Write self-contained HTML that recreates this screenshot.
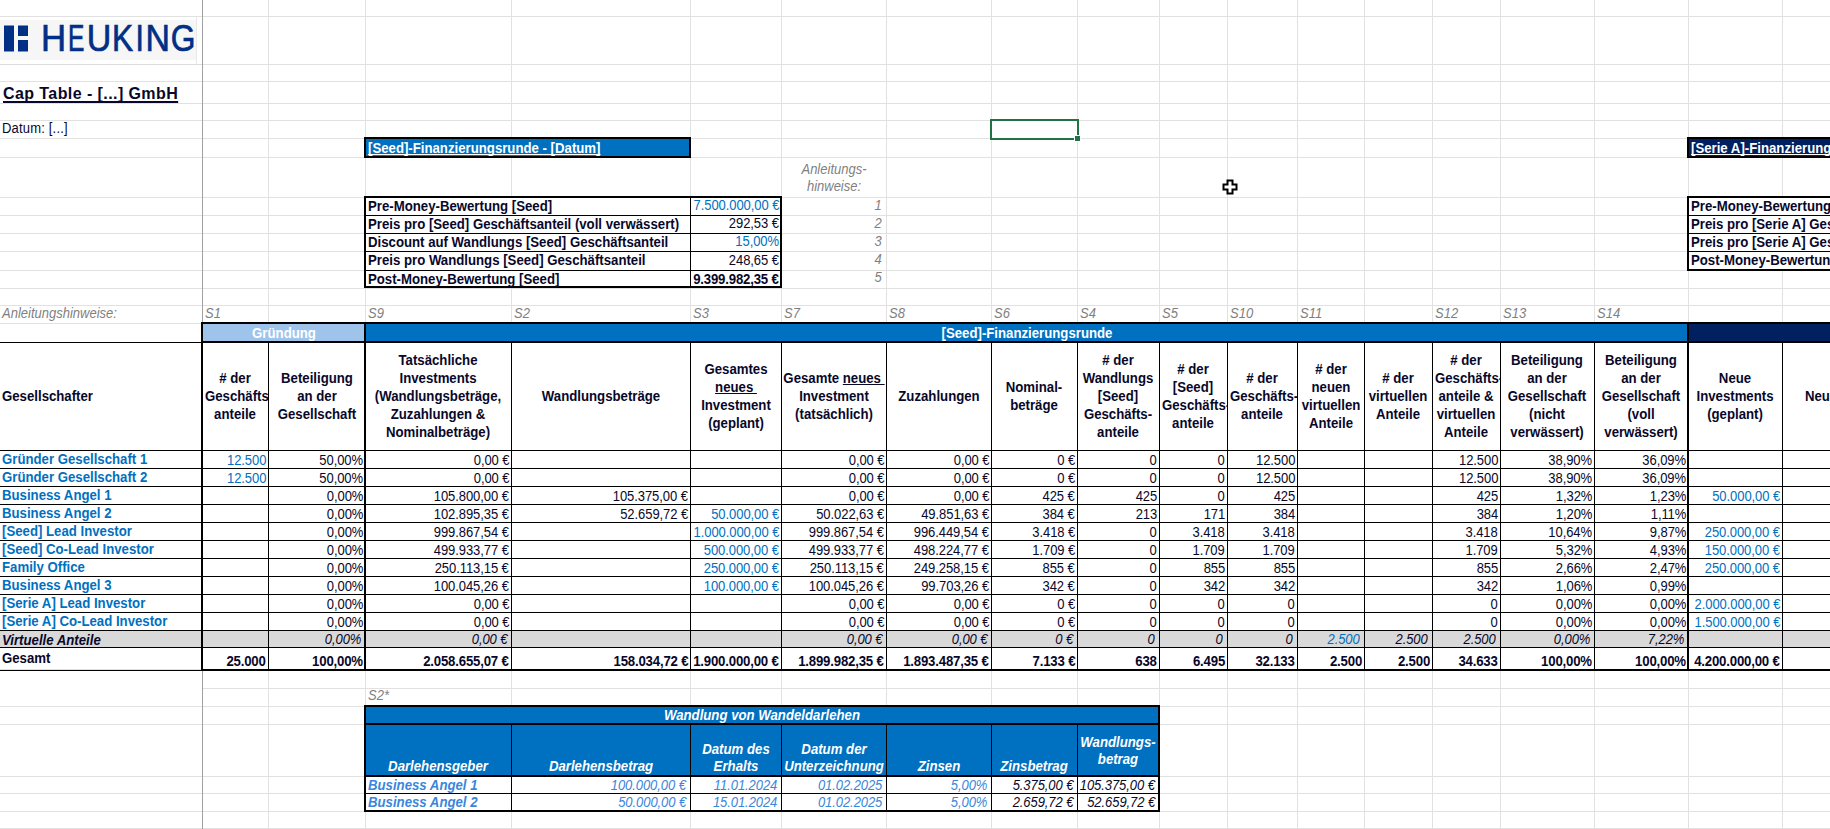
<!DOCTYPE html>
<html><head><meta charset="utf-8"><style>
html,body{margin:0;padding:0;background:#fff;}
#c{position:relative;width:1830px;height:829px;overflow:hidden;background:#fff;font-family:"Liberation Sans",sans-serif;color:#08082a;}
#c>div{position:absolute;}
#c .t{white-space:pre;line-height:20px;text-decoration-skip-ink:none;}
</style></head><body><div id="c">
<div style="left:268px;top:0px;width:1px;height:829px;background:#e1e1e1;"></div>
<div style="left:365px;top:0px;width:1px;height:829px;background:#e1e1e1;"></div>
<div style="left:511px;top:0px;width:1px;height:829px;background:#e1e1e1;"></div>
<div style="left:690px;top:0px;width:1px;height:829px;background:#e1e1e1;"></div>
<div style="left:781px;top:0px;width:1px;height:829px;background:#e1e1e1;"></div>
<div style="left:886px;top:0px;width:1px;height:829px;background:#e1e1e1;"></div>
<div style="left:991px;top:0px;width:1px;height:829px;background:#e1e1e1;"></div>
<div style="left:1077px;top:0px;width:1px;height:829px;background:#e1e1e1;"></div>
<div style="left:1159px;top:0px;width:1px;height:829px;background:#e1e1e1;"></div>
<div style="left:1227px;top:0px;width:1px;height:829px;background:#e1e1e1;"></div>
<div style="left:1297px;top:0px;width:1px;height:829px;background:#e1e1e1;"></div>
<div style="left:1364px;top:0px;width:1px;height:829px;background:#e1e1e1;"></div>
<div style="left:1432px;top:0px;width:1px;height:829px;background:#e1e1e1;"></div>
<div style="left:1500px;top:0px;width:1px;height:829px;background:#e1e1e1;"></div>
<div style="left:1594px;top:0px;width:1px;height:829px;background:#e1e1e1;"></div>
<div style="left:1688px;top:0px;width:1px;height:829px;background:#e1e1e1;"></div>
<div style="left:1782px;top:0px;width:1px;height:829px;background:#e1e1e1;"></div>
<div style="left:202px;top:16px;width:1628px;height:1px;background:#e1e1e1;"></div>
<div style="left:202px;top:64px;width:1628px;height:1px;background:#e1e1e1;"></div>
<div style="left:202px;top:81px;width:1628px;height:1px;background:#e1e1e1;"></div>
<div style="left:202px;top:103px;width:1628px;height:1px;background:#e1e1e1;"></div>
<div style="left:202px;top:120px;width:1628px;height:1px;background:#e1e1e1;"></div>
<div style="left:202px;top:138px;width:1628px;height:1px;background:#e1e1e1;"></div>
<div style="left:202px;top:157px;width:1628px;height:1px;background:#e1e1e1;"></div>
<div style="left:202px;top:197px;width:1628px;height:1px;background:#e1e1e1;"></div>
<div style="left:202px;top:215px;width:1628px;height:1px;background:#e1e1e1;"></div>
<div style="left:202px;top:233px;width:1628px;height:1px;background:#e1e1e1;"></div>
<div style="left:202px;top:251px;width:1628px;height:1px;background:#e1e1e1;"></div>
<div style="left:202px;top:270px;width:1628px;height:1px;background:#e1e1e1;"></div>
<div style="left:202px;top:288px;width:1628px;height:1px;background:#e1e1e1;"></div>
<div style="left:202px;top:305px;width:1628px;height:1px;background:#e1e1e1;"></div>
<div style="left:202px;top:323px;width:1628px;height:1px;background:#e1e1e1;"></div>
<div style="left:202px;top:342px;width:1628px;height:1px;background:#e1e1e1;"></div>
<div style="left:202px;top:450px;width:1628px;height:1px;background:#e1e1e1;"></div>
<div style="left:202px;top:468px;width:1628px;height:1px;background:#e1e1e1;"></div>
<div style="left:202px;top:486px;width:1628px;height:1px;background:#e1e1e1;"></div>
<div style="left:202px;top:504px;width:1628px;height:1px;background:#e1e1e1;"></div>
<div style="left:202px;top:522px;width:1628px;height:1px;background:#e1e1e1;"></div>
<div style="left:202px;top:540px;width:1628px;height:1px;background:#e1e1e1;"></div>
<div style="left:202px;top:558px;width:1628px;height:1px;background:#e1e1e1;"></div>
<div style="left:202px;top:576px;width:1628px;height:1px;background:#e1e1e1;"></div>
<div style="left:202px;top:594px;width:1628px;height:1px;background:#e1e1e1;"></div>
<div style="left:202px;top:612px;width:1628px;height:1px;background:#e1e1e1;"></div>
<div style="left:202px;top:630px;width:1628px;height:1px;background:#e1e1e1;"></div>
<div style="left:202px;top:647px;width:1628px;height:1px;background:#e1e1e1;"></div>
<div style="left:202px;top:669px;width:1628px;height:1px;background:#e1e1e1;"></div>
<div style="left:202px;top:688px;width:1628px;height:1px;background:#e1e1e1;"></div>
<div style="left:202px;top:706px;width:1628px;height:1px;background:#e1e1e1;"></div>
<div style="left:202px;top:724px;width:1628px;height:1px;background:#e1e1e1;"></div>
<div style="left:202px;top:776px;width:1628px;height:1px;background:#e1e1e1;"></div>
<div style="left:202px;top:793px;width:1628px;height:1px;background:#e1e1e1;"></div>
<div style="left:202px;top:811px;width:1628px;height:1px;background:#e1e1e1;"></div>
<div style="left:202px;top:828px;width:1628px;height:1px;background:#e1e1e1;"></div>
<div style="left:0px;top:16px;width:202px;height:1px;background:#e1e1e1;"></div>
<div style="left:0px;top:81px;width:202px;height:1px;background:#e1e1e1;"></div>
<div style="left:0px;top:103px;width:202px;height:1px;background:#e1e1e1;"></div>
<div style="left:0px;top:120px;width:202px;height:1px;background:#e1e1e1;"></div>
<div style="left:0px;top:138px;width:202px;height:1px;background:#e1e1e1;"></div>
<div style="left:0px;top:157px;width:202px;height:1px;background:#e1e1e1;"></div>
<div style="left:0px;top:197px;width:202px;height:1px;background:#e1e1e1;"></div>
<div style="left:0px;top:215px;width:202px;height:1px;background:#e1e1e1;"></div>
<div style="left:0px;top:233px;width:202px;height:1px;background:#e1e1e1;"></div>
<div style="left:0px;top:251px;width:202px;height:1px;background:#e1e1e1;"></div>
<div style="left:0px;top:270px;width:202px;height:1px;background:#e1e1e1;"></div>
<div style="left:0px;top:288px;width:202px;height:1px;background:#e1e1e1;"></div>
<div style="left:0px;top:305px;width:202px;height:1px;background:#e1e1e1;"></div>
<div style="left:0px;top:323px;width:202px;height:1px;background:#e1e1e1;"></div>
<div style="left:0px;top:342px;width:202px;height:1px;background:#e1e1e1;"></div>
<div style="left:0px;top:450px;width:202px;height:1px;background:#e1e1e1;"></div>
<div style="left:0px;top:468px;width:202px;height:1px;background:#e1e1e1;"></div>
<div style="left:0px;top:486px;width:202px;height:1px;background:#e1e1e1;"></div>
<div style="left:0px;top:504px;width:202px;height:1px;background:#e1e1e1;"></div>
<div style="left:0px;top:522px;width:202px;height:1px;background:#e1e1e1;"></div>
<div style="left:0px;top:540px;width:202px;height:1px;background:#e1e1e1;"></div>
<div style="left:0px;top:558px;width:202px;height:1px;background:#e1e1e1;"></div>
<div style="left:0px;top:576px;width:202px;height:1px;background:#e1e1e1;"></div>
<div style="left:0px;top:594px;width:202px;height:1px;background:#e1e1e1;"></div>
<div style="left:0px;top:612px;width:202px;height:1px;background:#e1e1e1;"></div>
<div style="left:0px;top:630px;width:202px;height:1px;background:#e1e1e1;"></div>
<div style="left:0px;top:647px;width:202px;height:1px;background:#e1e1e1;"></div>
<div style="left:0px;top:669px;width:202px;height:1px;background:#e1e1e1;"></div>
<div style="left:0px;top:706px;width:202px;height:1px;background:#e1e1e1;"></div>
<div style="left:0px;top:724px;width:202px;height:1px;background:#e1e1e1;"></div>
<div style="left:0px;top:776px;width:202px;height:1px;background:#e1e1e1;"></div>
<div style="left:0px;top:793px;width:202px;height:1px;background:#e1e1e1;"></div>
<div style="left:0px;top:811px;width:202px;height:1px;background:#e1e1e1;"></div>
<div style="left:0px;top:828px;width:202px;height:1px;background:#e1e1e1;"></div>
<div style="left:0px;top:17px;width:197px;height:47px;background:#ffffff;"></div>
<div style="left:0px;top:20px;width:196px;height:40px;background:#f6f6f6;"></div>
<div style="left:196px;top:17px;width:1px;height:47px;background:#e8e8e8;"></div>
<div style="left:0px;top:64px;width:202px;height:1px;background:#dcdcdc;"></div>
<div style="left:366px;top:198px;width:324px;height:17px;background:#fff;"></div>
<div style="left:366px;top:216px;width:324px;height:17px;background:#fff;"></div>
<div style="left:366px;top:234px;width:324px;height:17px;background:#fff;"></div>
<div style="left:366px;top:252px;width:324px;height:18px;background:#fff;"></div>
<div style="left:366px;top:271px;width:324px;height:16px;background:#fff;"></div>
<div style="left:782px;top:158px;width:104px;height:39px;background:#fff;"></div>
<div style="left:1689px;top:198px;width:141px;height:17px;background:#fff;"></div>
<div style="left:1689px;top:216px;width:141px;height:17px;background:#fff;"></div>
<div style="left:1689px;top:234px;width:141px;height:17px;background:#fff;"></div>
<div style="left:1689px;top:252px;width:141px;height:17px;background:#fff;"></div>
<div style="left:364px;top:137px;width:327px;height:21px;background:#000;"></div>
<div style="left:366px;top:139px;width:323px;height:17px;background:#0070c0;"></div>
<div style="left:364px;top:196px;width:418px;height:92px;background:#000;"></div>
<div style="left:366px;top:198px;width:414px;height:88px;background:#fff;"></div>
<div style="left:366px;top:215px;width:414px;height:1px;background:#000;"></div>
<div style="left:366px;top:233px;width:414px;height:1px;background:#000;"></div>
<div style="left:366px;top:251px;width:414px;height:1px;background:#000;"></div>
<div style="left:366px;top:270px;width:414px;height:1px;background:#000;"></div>
<div style="left:690px;top:198px;width:1px;height:88px;background:#000;"></div>
<div style="left:1687px;top:137px;width:143px;height:21px;background:#000;"></div>
<div style="left:1689px;top:139px;width:141px;height:17px;background:#002060;"></div>
<div style="left:1687px;top:196px;width:143px;height:75px;background:#000;"></div>
<div style="left:1689px;top:198px;width:141px;height:71px;background:#fff;"></div>
<div style="left:1689px;top:215px;width:141px;height:1px;background:#000;"></div>
<div style="left:1689px;top:233px;width:141px;height:1px;background:#000;"></div>
<div style="left:1689px;top:251px;width:141px;height:1px;background:#000;"></div>
<div style="left:202px;top:324px;width:163px;height:17px;background:#9ec4ec;"></div>
<div style="left:366px;top:324px;width:1321px;height:17px;background:#0070c0;"></div>
<div style="left:1689px;top:324px;width:141px;height:17px;background:#002060;"></div>
<div style="left:201px;top:322px;width:1629px;height:2px;background:#000;"></div>
<div style="left:201px;top:341px;width:1629px;height:2px;background:#000;"></div>
<div style="left:0px;top:342px;width:202px;height:1px;background:#000;"></div>
<div style="left:0px;top:343px;width:1830px;height:107px;background:#fff;"></div>
<div style="left:0px;top:630px;width:1830px;height:17px;background:#d9d9d9;"></div>
<div style="left:0px;top:648px;width:1830px;height:21px;background:#fff;"></div>
<div style="left:0px;top:450px;width:1830px;height:1px;background:#000;"></div>
<div style="left:0px;top:468px;width:1830px;height:1px;background:#000;"></div>
<div style="left:0px;top:486px;width:1830px;height:1px;background:#000;"></div>
<div style="left:0px;top:504px;width:1830px;height:1px;background:#000;"></div>
<div style="left:0px;top:522px;width:1830px;height:1px;background:#000;"></div>
<div style="left:0px;top:540px;width:1830px;height:1px;background:#000;"></div>
<div style="left:0px;top:558px;width:1830px;height:1px;background:#000;"></div>
<div style="left:0px;top:576px;width:1830px;height:1px;background:#000;"></div>
<div style="left:0px;top:594px;width:1830px;height:1px;background:#000;"></div>
<div style="left:0px;top:612px;width:1830px;height:1px;background:#000;"></div>
<div style="left:0px;top:630px;width:1830px;height:1px;background:#000;"></div>
<div style="left:0px;top:647px;width:1830px;height:1px;background:#000;"></div>
<div style="left:202px;top:669px;width:1628px;height:2px;background:#000;"></div>
<div style="left:0px;top:670px;width:202px;height:1px;background:#000;"></div>
<div style="left:201px;top:322px;width:2px;height:349px;background:#000;"></div>
<div style="left:364px;top:322px;width:2px;height:349px;background:#000;"></div>
<div style="left:1687px;top:322px;width:2px;height:349px;background:#000;"></div>
<div style="left:268px;top:342px;width:1px;height:327px;background:#000;"></div>
<div style="left:511px;top:342px;width:1px;height:327px;background:#000;"></div>
<div style="left:690px;top:342px;width:1px;height:327px;background:#000;"></div>
<div style="left:781px;top:342px;width:1px;height:327px;background:#000;"></div>
<div style="left:886px;top:342px;width:1px;height:327px;background:#000;"></div>
<div style="left:991px;top:342px;width:1px;height:327px;background:#000;"></div>
<div style="left:1077px;top:342px;width:1px;height:327px;background:#000;"></div>
<div style="left:1159px;top:342px;width:1px;height:327px;background:#000;"></div>
<div style="left:1227px;top:342px;width:1px;height:327px;background:#000;"></div>
<div style="left:1297px;top:342px;width:1px;height:327px;background:#000;"></div>
<div style="left:1364px;top:342px;width:1px;height:327px;background:#000;"></div>
<div style="left:1432px;top:342px;width:1px;height:327px;background:#000;"></div>
<div style="left:1500px;top:342px;width:1px;height:327px;background:#000;"></div>
<div style="left:1594px;top:342px;width:1px;height:327px;background:#000;"></div>
<div style="left:1782px;top:342px;width:1px;height:327px;background:#000;"></div>
<div style="left:202px;top:0px;width:1px;height:322px;background:#a0a0a0;"></div>
<div style="left:202px;top:671px;width:1px;height:158px;background:#a0a0a0;"></div>
<div style="left:364px;top:705px;width:796px;height:107px;background:#000;"></div>
<div style="left:366px;top:707px;width:792px;height:16px;background:#0070c0;"></div>
<div style="left:366px;top:725px;width:792px;height:50px;background:#0070c0;"></div>
<div style="left:366px;top:777px;width:792px;height:33px;background:#fff;"></div>
<div style="left:366px;top:793px;width:792px;height:1px;background:#000;"></div>
<div style="left:511px;top:725px;width:1px;height:85px;background:#000;"></div>
<div style="left:690px;top:725px;width:1px;height:85px;background:#000;"></div>
<div style="left:781px;top:725px;width:1px;height:85px;background:#000;"></div>
<div style="left:886px;top:725px;width:1px;height:85px;background:#000;"></div>
<div style="left:991px;top:725px;width:1px;height:85px;background:#000;"></div>
<div style="left:1077px;top:725px;width:1px;height:85px;background:#000;"></div>
<div style="left:990px;top:119px;width:85px;height:17px;border:2px solid #217346;background:transparent"></div>
<div style="left:1074px;top:135px;width:7px;height:7px;background:#fff;"></div>
<div style="left:1075px;top:136px;width:5px;height:5px;background:#217346;"></div>
<div class="t" style="top:84px;font-size:16px;letter-spacing:0.42px;font-weight:bold;text-decoration:underline;left:3px;text-decoration-thickness:2px;text-underline-offset:2px;">Cap Table - [...] GmbH</div>
<div class="t" style="top:118px;font-size:14px;letter-spacing:0.2px;left:2px;transform:scaleX(0.9286);transform-origin:left;">Datum: [...]</div>
<div class="t" style="top:138px;font-size:14px;font-weight:bold;color:#fff;text-decoration:underline;left:368px;transform:scaleX(0.9429);transform-origin:left;">[Seed]-Finanzierungsrunde - [Datum]</div>
<div class="t" style="top:138px;font-size:14px;font-weight:bold;color:#fff;text-decoration:underline;left:1691px;transform:scaleX(0.9429);transform-origin:left;">[Serie A]-Finanzierungsrunde - [Datum]</div>
<div class="t" style="top:196px;font-size:14px;font-weight:bold;left:368px;transform:scaleX(0.9429);transform-origin:left;">Pre-Money-Bewertung [Seed]</div>
<div class="t" style="top:195px;font-size:14px;letter-spacing:-0.08px;color:#0070c0;right:1051px;transform:scaleX(0.9286);transform-origin:right;">7.500.000,00 €</div>
<div class="t" style="top:214px;font-size:14px;font-weight:bold;left:368px;transform:scaleX(0.9429);transform-origin:left;">Preis pro [Seed] Geschäftsanteil (voll verwässert)</div>
<div class="t" style="top:213px;font-size:14px;letter-spacing:-0.08px;right:1051px;transform:scaleX(0.9286);transform-origin:right;">292,53 €</div>
<div class="t" style="top:232px;font-size:14px;font-weight:bold;left:368px;transform:scaleX(0.9429);transform-origin:left;">Discount auf Wandlungs [Seed] Geschäftsanteil</div>
<div class="t" style="top:231px;font-size:14px;letter-spacing:-0.08px;color:#0070c0;right:1051px;transform:scaleX(0.9286);transform-origin:right;">15,00%</div>
<div class="t" style="top:250px;font-size:14px;font-weight:bold;left:368px;transform:scaleX(0.9429);transform-origin:left;">Preis pro Wandlungs [Seed] Geschäftsanteil</div>
<div class="t" style="top:250px;font-size:14px;letter-spacing:-0.08px;right:1051px;transform:scaleX(0.9286);transform-origin:right;">248,65 €</div>
<div class="t" style="top:269px;font-size:14px;font-weight:bold;left:368px;transform:scaleX(0.9429);transform-origin:left;">Post-Money-Bewertung [Seed]</div>
<div class="t" style="top:269px;font-size:14px;letter-spacing:-0.2px;font-weight:bold;right:1051px;transform:scaleX(0.9429);transform-origin:right;">9.399.982,35 €</div>
<div class="t" style="top:195px;font-size:14px;letter-spacing:-0.08px;font-style:italic;color:#7f7f7f;right:948px;transform:scaleX(0.9286);transform-origin:right;">1</div>
<div class="t" style="top:213px;font-size:14px;letter-spacing:-0.08px;font-style:italic;color:#7f7f7f;right:948px;transform:scaleX(0.9286);transform-origin:right;">2</div>
<div class="t" style="top:231px;font-size:14px;letter-spacing:-0.08px;font-style:italic;color:#7f7f7f;right:948px;transform:scaleX(0.9286);transform-origin:right;">3</div>
<div class="t" style="top:249px;font-size:14px;letter-spacing:-0.08px;font-style:italic;color:#7f7f7f;right:948px;transform:scaleX(0.9286);transform-origin:right;">4</div>
<div class="t" style="top:267px;font-size:14px;letter-spacing:-0.08px;font-style:italic;color:#7f7f7f;right:948px;transform:scaleX(0.9286);transform-origin:right;">5</div>
<div class="t" style="top:159px;font-size:14px;font-style:italic;color:#7f7f7f;left:433.5px;width:800px;text-align:center;transform:scaleX(0.9286);transform-origin:center;">Anleitungs-</div>
<div class="t" style="top:176px;font-size:14px;font-style:italic;color:#7f7f7f;left:433.5px;width:800px;text-align:center;transform:scaleX(0.9286);transform-origin:center;">hinweise:</div>
<div class="t" style="top:196px;font-size:14px;font-weight:bold;left:1691px;transform:scaleX(0.9429);transform-origin:left;">Pre-Money-Bewertung [Serie A]</div>
<div class="t" style="top:214px;font-size:14px;font-weight:bold;left:1691px;transform:scaleX(0.9429);transform-origin:left;">Preis pro [Serie A] Geschäftsanteil (voll verwässert)</div>
<div class="t" style="top:232px;font-size:14px;font-weight:bold;left:1691px;transform:scaleX(0.9429);transform-origin:left;">Preis pro [Serie A] Geschäftsanteil</div>
<div class="t" style="top:250px;font-size:14px;font-weight:bold;left:1691px;transform:scaleX(0.9429);transform-origin:left;">Post-Money-Bewertung [Serie A]</div>
<div class="t" style="top:303px;font-size:14px;font-style:italic;color:#7f7f7f;left:2px;transform:scaleX(0.9286);transform-origin:left;">Anleitungshinweise:</div>
<div class="t" style="top:303px;font-size:14px;font-style:italic;color:#7f7f7f;left:205px;transform:scaleX(0.9286);transform-origin:left;">S1</div>
<div class="t" style="top:303px;font-size:14px;font-style:italic;color:#7f7f7f;left:368px;transform:scaleX(0.9286);transform-origin:left;">S9</div>
<div class="t" style="top:303px;font-size:14px;font-style:italic;color:#7f7f7f;left:514px;transform:scaleX(0.9286);transform-origin:left;">S2</div>
<div class="t" style="top:303px;font-size:14px;font-style:italic;color:#7f7f7f;left:693px;transform:scaleX(0.9286);transform-origin:left;">S3</div>
<div class="t" style="top:303px;font-size:14px;font-style:italic;color:#7f7f7f;left:784px;transform:scaleX(0.9286);transform-origin:left;">S7</div>
<div class="t" style="top:303px;font-size:14px;font-style:italic;color:#7f7f7f;left:889px;transform:scaleX(0.9286);transform-origin:left;">S8</div>
<div class="t" style="top:303px;font-size:14px;font-style:italic;color:#7f7f7f;left:994px;transform:scaleX(0.9286);transform-origin:left;">S6</div>
<div class="t" style="top:303px;font-size:14px;font-style:italic;color:#7f7f7f;left:1080px;transform:scaleX(0.9286);transform-origin:left;">S4</div>
<div class="t" style="top:303px;font-size:14px;font-style:italic;color:#7f7f7f;left:1162px;transform:scaleX(0.9286);transform-origin:left;">S5</div>
<div class="t" style="top:303px;font-size:14px;font-style:italic;color:#7f7f7f;left:1230px;transform:scaleX(0.9286);transform-origin:left;">S10</div>
<div class="t" style="top:303px;font-size:14px;font-style:italic;color:#7f7f7f;left:1300px;transform:scaleX(0.9286);transform-origin:left;">S11</div>
<div class="t" style="top:303px;font-size:14px;font-style:italic;color:#7f7f7f;left:1435px;transform:scaleX(0.9286);transform-origin:left;">S12</div>
<div class="t" style="top:303px;font-size:14px;font-style:italic;color:#7f7f7f;left:1503px;transform:scaleX(0.9286);transform-origin:left;">S13</div>
<div class="t" style="top:303px;font-size:14px;font-style:italic;color:#7f7f7f;left:1597px;transform:scaleX(0.9286);transform-origin:left;">S14</div>
<div class="t" style="top:323px;font-size:14px;font-weight:bold;color:#fff;left:-116.5px;width:800px;text-align:center;transform:scaleX(0.9429);transform-origin:center;">Gründung</div>
<div class="t" style="top:323px;font-size:14px;font-weight:bold;color:#fff;left:626.5px;width:800px;text-align:center;transform:scaleX(0.9429);transform-origin:center;">[Seed]-Finanzierungsrunde</div>
<div class="t" style="top:386px;font-size:14px;font-weight:bold;left:2px;transform:scaleX(0.9429);transform-origin:left;">Gesellschafter</div>
<div class="t" style="top:368px;font-size:14px;font-weight:bold;left:-165.0px;width:800px;text-align:center;transform:scaleX(0.9429);transform-origin:center;"># der</div>
<div style="left:203px;top:385px;width:65px;height:20px;overflow:hidden">
<div class="t" style="position:absolute;left:2px;top:1px;font-size:14px;font-weight:bold;transform:scaleX(0.9429);transform-origin:left">Geschäfts-</div></div>
<div class="t" style="top:404px;font-size:14px;font-weight:bold;left:-165.0px;width:800px;text-align:center;transform:scaleX(0.9429);transform-origin:center;">anteile</div>
<div class="t" style="top:368px;font-size:14px;font-weight:bold;left:-83.5px;width:800px;text-align:center;transform:scaleX(0.9429);transform-origin:center;">Beteiligung</div>
<div class="t" style="top:386px;font-size:14px;font-weight:bold;left:-83.5px;width:800px;text-align:center;transform:scaleX(0.9429);transform-origin:center;">an der</div>
<div class="t" style="top:404px;font-size:14px;font-weight:bold;left:-83.5px;width:800px;text-align:center;transform:scaleX(0.9429);transform-origin:center;">Gesellschaft</div>
<div class="t" style="top:350px;font-size:14px;font-weight:bold;left:38.0px;width:800px;text-align:center;transform:scaleX(0.9429);transform-origin:center;">Tatsächliche</div>
<div class="t" style="top:368px;font-size:14px;font-weight:bold;left:38.0px;width:800px;text-align:center;transform:scaleX(0.9429);transform-origin:center;">Investments</div>
<div class="t" style="top:386px;font-size:14px;font-weight:bold;left:38.0px;width:800px;text-align:center;transform:scaleX(0.9429);transform-origin:center;">(Wandlungsbeträge,</div>
<div class="t" style="top:404px;font-size:14px;font-weight:bold;left:38.0px;width:800px;text-align:center;transform:scaleX(0.9429);transform-origin:center;">Zuzahlungen &amp;</div>
<div class="t" style="top:422px;font-size:14px;font-weight:bold;left:38.0px;width:800px;text-align:center;transform:scaleX(0.9429);transform-origin:center;">Nominalbeträge)</div>
<div class="t" style="top:386px;font-size:14px;font-weight:bold;left:200.5px;width:800px;text-align:center;transform:scaleX(0.9429);transform-origin:center;">Wandlungsbeträge</div>
<div class="t" style="top:359px;font-size:14px;font-weight:bold;left:335.5px;width:800px;text-align:center;transform:scaleX(0.9429);transform-origin:center;">Gesamtes</div>
<div class="t" style="top:377px;font-size:14px;font-weight:bold;left:335.5px;width:800px;text-align:center;transform:scaleX(0.9429);transform-origin:center;"><u>neues </u></div>
<div class="t" style="top:395px;font-size:14px;font-weight:bold;left:335.5px;width:800px;text-align:center;transform:scaleX(0.9429);transform-origin:center;">Investment</div>
<div class="t" style="top:413px;font-size:14px;font-weight:bold;left:335.5px;width:800px;text-align:center;transform:scaleX(0.9429);transform-origin:center;">(geplant)</div>
<div class="t" style="top:368px;font-size:14px;font-weight:bold;left:433.5px;width:800px;text-align:center;transform:scaleX(0.9429);transform-origin:center;">Gesamte <u>neues </u></div>
<div class="t" style="top:386px;font-size:14px;font-weight:bold;left:433.5px;width:800px;text-align:center;transform:scaleX(0.9429);transform-origin:center;">Investment</div>
<div class="t" style="top:404px;font-size:14px;font-weight:bold;left:433.5px;width:800px;text-align:center;transform:scaleX(0.9429);transform-origin:center;">(tatsächlich)</div>
<div class="t" style="top:386px;font-size:14px;font-weight:bold;left:538.5px;width:800px;text-align:center;transform:scaleX(0.9429);transform-origin:center;">Zuzahlungen</div>
<div class="t" style="top:377px;font-size:14px;font-weight:bold;left:634.0px;width:800px;text-align:center;transform:scaleX(0.9429);transform-origin:center;">Nominal-</div>
<div class="t" style="top:395px;font-size:14px;font-weight:bold;left:634.0px;width:800px;text-align:center;transform:scaleX(0.9429);transform-origin:center;">beträge</div>
<div class="t" style="top:350px;font-size:14px;font-weight:bold;left:718.0px;width:800px;text-align:center;transform:scaleX(0.9429);transform-origin:center;"># der</div>
<div class="t" style="top:368px;font-size:14px;font-weight:bold;left:718.0px;width:800px;text-align:center;transform:scaleX(0.9429);transform-origin:center;">Wandlungs</div>
<div class="t" style="top:386px;font-size:14px;font-weight:bold;left:718.0px;width:800px;text-align:center;transform:scaleX(0.9429);transform-origin:center;">[Seed]</div>
<div class="t" style="top:404px;font-size:14px;font-weight:bold;left:718.0px;width:800px;text-align:center;transform:scaleX(0.9429);transform-origin:center;">Geschäfts-</div>
<div class="t" style="top:422px;font-size:14px;font-weight:bold;left:718.0px;width:800px;text-align:center;transform:scaleX(0.9429);transform-origin:center;">anteile</div>
<div class="t" style="top:359px;font-size:14px;font-weight:bold;left:793.0px;width:800px;text-align:center;transform:scaleX(0.9429);transform-origin:center;"># der</div>
<div class="t" style="top:377px;font-size:14px;font-weight:bold;left:793.0px;width:800px;text-align:center;transform:scaleX(0.9429);transform-origin:center;">[Seed]</div>
<div style="left:1160px;top:394px;width:67px;height:20px;overflow:hidden">
<div class="t" style="position:absolute;left:2px;top:1px;font-size:14px;font-weight:bold;transform:scaleX(0.9429);transform-origin:left">Geschäfts-</div></div>
<div class="t" style="top:413px;font-size:14px;font-weight:bold;left:793.0px;width:800px;text-align:center;transform:scaleX(0.9429);transform-origin:center;">anteile</div>
<div class="t" style="top:368px;font-size:14px;font-weight:bold;left:862.0px;width:800px;text-align:center;transform:scaleX(0.9429);transform-origin:center;"># der</div>
<div style="left:1228px;top:385px;width:69px;height:20px;overflow:hidden">
<div class="t" style="position:absolute;left:2px;top:1px;font-size:14px;font-weight:bold;transform:scaleX(0.9429);transform-origin:left">Geschäfts-</div></div>
<div class="t" style="top:404px;font-size:14px;font-weight:bold;left:862.0px;width:800px;text-align:center;transform:scaleX(0.9429);transform-origin:center;">anteile</div>
<div class="t" style="top:359px;font-size:14px;font-weight:bold;left:930.5px;width:800px;text-align:center;transform:scaleX(0.9429);transform-origin:center;"># der</div>
<div class="t" style="top:377px;font-size:14px;font-weight:bold;left:930.5px;width:800px;text-align:center;transform:scaleX(0.9429);transform-origin:center;">neuen</div>
<div class="t" style="top:395px;font-size:14px;font-weight:bold;left:930.5px;width:800px;text-align:center;transform:scaleX(0.9429);transform-origin:center;">virtuellen</div>
<div class="t" style="top:413px;font-size:14px;font-weight:bold;left:930.5px;width:800px;text-align:center;transform:scaleX(0.9429);transform-origin:center;">Anteile</div>
<div class="t" style="top:368px;font-size:14px;font-weight:bold;left:998.0px;width:800px;text-align:center;transform:scaleX(0.9429);transform-origin:center;"># der</div>
<div class="t" style="top:386px;font-size:14px;font-weight:bold;left:998.0px;width:800px;text-align:center;transform:scaleX(0.9429);transform-origin:center;">virtuellen</div>
<div class="t" style="top:404px;font-size:14px;font-weight:bold;left:998.0px;width:800px;text-align:center;transform:scaleX(0.9429);transform-origin:center;">Anteile</div>
<div class="t" style="top:350px;font-size:14px;font-weight:bold;left:1066.0px;width:800px;text-align:center;transform:scaleX(0.9429);transform-origin:center;"># der</div>
<div style="left:1433px;top:367px;width:67px;height:20px;overflow:hidden">
<div class="t" style="position:absolute;left:2px;top:1px;font-size:14px;font-weight:bold;transform:scaleX(0.9429);transform-origin:left">Geschäfts-</div></div>
<div class="t" style="top:386px;font-size:14px;font-weight:bold;left:1066.0px;width:800px;text-align:center;transform:scaleX(0.9429);transform-origin:center;">anteile &amp;</div>
<div class="t" style="top:404px;font-size:14px;font-weight:bold;left:1066.0px;width:800px;text-align:center;transform:scaleX(0.9429);transform-origin:center;">virtuellen</div>
<div class="t" style="top:422px;font-size:14px;font-weight:bold;left:1066.0px;width:800px;text-align:center;transform:scaleX(0.9429);transform-origin:center;">Anteile</div>
<div class="t" style="top:350px;font-size:14px;font-weight:bold;left:1147.0px;width:800px;text-align:center;transform:scaleX(0.9429);transform-origin:center;">Beteiligung</div>
<div class="t" style="top:368px;font-size:14px;font-weight:bold;left:1147.0px;width:800px;text-align:center;transform:scaleX(0.9429);transform-origin:center;">an der</div>
<div class="t" style="top:386px;font-size:14px;font-weight:bold;left:1147.0px;width:800px;text-align:center;transform:scaleX(0.9429);transform-origin:center;">Gesellschaft</div>
<div class="t" style="top:404px;font-size:14px;font-weight:bold;left:1147.0px;width:800px;text-align:center;transform:scaleX(0.9429);transform-origin:center;">(nicht</div>
<div class="t" style="top:422px;font-size:14px;font-weight:bold;left:1147.0px;width:800px;text-align:center;transform:scaleX(0.9429);transform-origin:center;">verwässert)</div>
<div class="t" style="top:350px;font-size:14px;font-weight:bold;left:1241.0px;width:800px;text-align:center;transform:scaleX(0.9429);transform-origin:center;">Beteiligung</div>
<div class="t" style="top:368px;font-size:14px;font-weight:bold;left:1241.0px;width:800px;text-align:center;transform:scaleX(0.9429);transform-origin:center;">an der</div>
<div class="t" style="top:386px;font-size:14px;font-weight:bold;left:1241.0px;width:800px;text-align:center;transform:scaleX(0.9429);transform-origin:center;">Gesellschaft</div>
<div class="t" style="top:404px;font-size:14px;font-weight:bold;left:1241.0px;width:800px;text-align:center;transform:scaleX(0.9429);transform-origin:center;">(voll</div>
<div class="t" style="top:422px;font-size:14px;font-weight:bold;left:1241.0px;width:800px;text-align:center;transform:scaleX(0.9429);transform-origin:center;">verwässert)</div>
<div class="t" style="top:368px;font-size:14px;font-weight:bold;left:1335.0px;width:800px;text-align:center;transform:scaleX(0.9429);transform-origin:center;">Neue</div>
<div class="t" style="top:386px;font-size:14px;font-weight:bold;left:1335.0px;width:800px;text-align:center;transform:scaleX(0.9429);transform-origin:center;">Investments</div>
<div class="t" style="top:404px;font-size:14px;font-weight:bold;left:1335.0px;width:800px;text-align:center;transform:scaleX(0.9429);transform-origin:center;">(geplant)</div>
<div class="t" style="top:386px;font-size:14px;font-weight:bold;left:1805px;transform:scaleX(0.9429);transform-origin:left;">Neue Anteile</div>
<div class="t" style="top:449px;font-size:14px;font-weight:bold;color:#0070c0;left:2px;transform:scaleX(0.9429);transform-origin:left;">Gründer Gesellschaft 1</div>
<div class="t" style="top:450px;font-size:14px;letter-spacing:-0.08px;color:#0070c0;right:1564px;transform:scaleX(0.9286);transform-origin:right;">12.500</div>
<div class="t" style="top:450px;font-size:14px;letter-spacing:-0.08px;right:1467px;transform:scaleX(0.9286);transform-origin:right;">50,00%</div>
<div class="t" style="top:450px;font-size:14px;letter-spacing:-0.08px;right:1321px;transform:scaleX(0.9286);transform-origin:right;">0,00 €</div>
<div class="t" style="top:450px;font-size:14px;letter-spacing:-0.08px;right:946px;transform:scaleX(0.9286);transform-origin:right;">0,00 €</div>
<div class="t" style="top:450px;font-size:14px;letter-spacing:-0.08px;right:841px;transform:scaleX(0.9286);transform-origin:right;">0,00 €</div>
<div class="t" style="top:450px;font-size:14px;letter-spacing:-0.08px;right:755px;transform:scaleX(0.9286);transform-origin:right;">0 €</div>
<div class="t" style="top:450px;font-size:14px;letter-spacing:-0.08px;right:673px;transform:scaleX(0.9286);transform-origin:right;">0</div>
<div class="t" style="top:450px;font-size:14px;letter-spacing:-0.08px;right:605px;transform:scaleX(0.9286);transform-origin:right;">0</div>
<div class="t" style="top:450px;font-size:14px;letter-spacing:-0.08px;right:535px;transform:scaleX(0.9286);transform-origin:right;">12.500</div>
<div class="t" style="top:450px;font-size:14px;letter-spacing:-0.08px;right:332px;transform:scaleX(0.9286);transform-origin:right;">12.500</div>
<div class="t" style="top:450px;font-size:14px;letter-spacing:-0.08px;right:238px;transform:scaleX(0.9286);transform-origin:right;">38,90%</div>
<div class="t" style="top:450px;font-size:14px;letter-spacing:-0.08px;right:144px;transform:scaleX(0.9286);transform-origin:right;">36,09%</div>
<div class="t" style="top:467px;font-size:14px;font-weight:bold;color:#0070c0;left:2px;transform:scaleX(0.9429);transform-origin:left;">Gründer Gesellschaft 2</div>
<div class="t" style="top:468px;font-size:14px;letter-spacing:-0.08px;color:#0070c0;right:1564px;transform:scaleX(0.9286);transform-origin:right;">12.500</div>
<div class="t" style="top:468px;font-size:14px;letter-spacing:-0.08px;right:1467px;transform:scaleX(0.9286);transform-origin:right;">50,00%</div>
<div class="t" style="top:468px;font-size:14px;letter-spacing:-0.08px;right:1321px;transform:scaleX(0.9286);transform-origin:right;">0,00 €</div>
<div class="t" style="top:468px;font-size:14px;letter-spacing:-0.08px;right:946px;transform:scaleX(0.9286);transform-origin:right;">0,00 €</div>
<div class="t" style="top:468px;font-size:14px;letter-spacing:-0.08px;right:841px;transform:scaleX(0.9286);transform-origin:right;">0,00 €</div>
<div class="t" style="top:468px;font-size:14px;letter-spacing:-0.08px;right:755px;transform:scaleX(0.9286);transform-origin:right;">0 €</div>
<div class="t" style="top:468px;font-size:14px;letter-spacing:-0.08px;right:673px;transform:scaleX(0.9286);transform-origin:right;">0</div>
<div class="t" style="top:468px;font-size:14px;letter-spacing:-0.08px;right:605px;transform:scaleX(0.9286);transform-origin:right;">0</div>
<div class="t" style="top:468px;font-size:14px;letter-spacing:-0.08px;right:535px;transform:scaleX(0.9286);transform-origin:right;">12.500</div>
<div class="t" style="top:468px;font-size:14px;letter-spacing:-0.08px;right:332px;transform:scaleX(0.9286);transform-origin:right;">12.500</div>
<div class="t" style="top:468px;font-size:14px;letter-spacing:-0.08px;right:238px;transform:scaleX(0.9286);transform-origin:right;">38,90%</div>
<div class="t" style="top:468px;font-size:14px;letter-spacing:-0.08px;right:144px;transform:scaleX(0.9286);transform-origin:right;">36,09%</div>
<div class="t" style="top:485px;font-size:14px;font-weight:bold;color:#0070c0;left:2px;transform:scaleX(0.9429);transform-origin:left;">Business Angel 1</div>
<div class="t" style="top:486px;font-size:14px;letter-spacing:-0.08px;right:1467px;transform:scaleX(0.9286);transform-origin:right;">0,00%</div>
<div class="t" style="top:486px;font-size:14px;letter-spacing:-0.08px;right:1321px;transform:scaleX(0.9286);transform-origin:right;">105.800,00 €</div>
<div class="t" style="top:486px;font-size:14px;letter-spacing:-0.08px;right:1142px;transform:scaleX(0.9286);transform-origin:right;">105.375,00 €</div>
<div class="t" style="top:486px;font-size:14px;letter-spacing:-0.08px;right:946px;transform:scaleX(0.9286);transform-origin:right;">0,00 €</div>
<div class="t" style="top:486px;font-size:14px;letter-spacing:-0.08px;right:841px;transform:scaleX(0.9286);transform-origin:right;">0,00 €</div>
<div class="t" style="top:486px;font-size:14px;letter-spacing:-0.08px;right:755px;transform:scaleX(0.9286);transform-origin:right;">425 €</div>
<div class="t" style="top:486px;font-size:14px;letter-spacing:-0.08px;right:673px;transform:scaleX(0.9286);transform-origin:right;">425</div>
<div class="t" style="top:486px;font-size:14px;letter-spacing:-0.08px;right:605px;transform:scaleX(0.9286);transform-origin:right;">0</div>
<div class="t" style="top:486px;font-size:14px;letter-spacing:-0.08px;right:535px;transform:scaleX(0.9286);transform-origin:right;">425</div>
<div class="t" style="top:486px;font-size:14px;letter-spacing:-0.08px;right:332px;transform:scaleX(0.9286);transform-origin:right;">425</div>
<div class="t" style="top:486px;font-size:14px;letter-spacing:-0.08px;right:238px;transform:scaleX(0.9286);transform-origin:right;">1,32%</div>
<div class="t" style="top:486px;font-size:14px;letter-spacing:-0.08px;right:144px;transform:scaleX(0.9286);transform-origin:right;">1,23%</div>
<div class="t" style="top:486px;font-size:14px;letter-spacing:-0.08px;color:#0070c0;right:50px;transform:scaleX(0.9286);transform-origin:right;">50.000,00 €</div>
<div class="t" style="top:503px;font-size:14px;font-weight:bold;color:#0070c0;left:2px;transform:scaleX(0.9429);transform-origin:left;">Business Angel 2</div>
<div class="t" style="top:504px;font-size:14px;letter-spacing:-0.08px;right:1467px;transform:scaleX(0.9286);transform-origin:right;">0,00%</div>
<div class="t" style="top:504px;font-size:14px;letter-spacing:-0.08px;right:1321px;transform:scaleX(0.9286);transform-origin:right;">102.895,35 €</div>
<div class="t" style="top:504px;font-size:14px;letter-spacing:-0.08px;right:1142px;transform:scaleX(0.9286);transform-origin:right;">52.659,72 €</div>
<div class="t" style="top:504px;font-size:14px;letter-spacing:-0.08px;color:#0070c0;right:1051px;transform:scaleX(0.9286);transform-origin:right;">50.000,00 €</div>
<div class="t" style="top:504px;font-size:14px;letter-spacing:-0.08px;right:946px;transform:scaleX(0.9286);transform-origin:right;">50.022,63 €</div>
<div class="t" style="top:504px;font-size:14px;letter-spacing:-0.08px;right:841px;transform:scaleX(0.9286);transform-origin:right;">49.851,63 €</div>
<div class="t" style="top:504px;font-size:14px;letter-spacing:-0.08px;right:755px;transform:scaleX(0.9286);transform-origin:right;">384 €</div>
<div class="t" style="top:504px;font-size:14px;letter-spacing:-0.08px;right:673px;transform:scaleX(0.9286);transform-origin:right;">213</div>
<div class="t" style="top:504px;font-size:14px;letter-spacing:-0.08px;right:605px;transform:scaleX(0.9286);transform-origin:right;">171</div>
<div class="t" style="top:504px;font-size:14px;letter-spacing:-0.08px;right:535px;transform:scaleX(0.9286);transform-origin:right;">384</div>
<div class="t" style="top:504px;font-size:14px;letter-spacing:-0.08px;right:332px;transform:scaleX(0.9286);transform-origin:right;">384</div>
<div class="t" style="top:504px;font-size:14px;letter-spacing:-0.08px;right:238px;transform:scaleX(0.9286);transform-origin:right;">1,20%</div>
<div class="t" style="top:504px;font-size:14px;letter-spacing:-0.08px;right:144px;transform:scaleX(0.9286);transform-origin:right;">1,11%</div>
<div class="t" style="top:521px;font-size:14px;font-weight:bold;color:#0070c0;left:2px;transform:scaleX(0.9429);transform-origin:left;">[Seed] Lead Investor</div>
<div class="t" style="top:522px;font-size:14px;letter-spacing:-0.08px;right:1467px;transform:scaleX(0.9286);transform-origin:right;">0,00%</div>
<div class="t" style="top:522px;font-size:14px;letter-spacing:-0.08px;right:1321px;transform:scaleX(0.9286);transform-origin:right;">999.867,54 €</div>
<div class="t" style="top:522px;font-size:14px;letter-spacing:-0.08px;color:#0070c0;right:1051px;transform:scaleX(0.9286);transform-origin:right;">1.000.000,00 €</div>
<div class="t" style="top:522px;font-size:14px;letter-spacing:-0.08px;right:946px;transform:scaleX(0.9286);transform-origin:right;">999.867,54 €</div>
<div class="t" style="top:522px;font-size:14px;letter-spacing:-0.08px;right:841px;transform:scaleX(0.9286);transform-origin:right;">996.449,54 €</div>
<div class="t" style="top:522px;font-size:14px;letter-spacing:-0.08px;right:755px;transform:scaleX(0.9286);transform-origin:right;">3.418 €</div>
<div class="t" style="top:522px;font-size:14px;letter-spacing:-0.08px;right:673px;transform:scaleX(0.9286);transform-origin:right;">0</div>
<div class="t" style="top:522px;font-size:14px;letter-spacing:-0.08px;right:605px;transform:scaleX(0.9286);transform-origin:right;">3.418</div>
<div class="t" style="top:522px;font-size:14px;letter-spacing:-0.08px;right:535px;transform:scaleX(0.9286);transform-origin:right;">3.418</div>
<div class="t" style="top:522px;font-size:14px;letter-spacing:-0.08px;right:332px;transform:scaleX(0.9286);transform-origin:right;">3.418</div>
<div class="t" style="top:522px;font-size:14px;letter-spacing:-0.08px;right:238px;transform:scaleX(0.9286);transform-origin:right;">10,64%</div>
<div class="t" style="top:522px;font-size:14px;letter-spacing:-0.08px;right:144px;transform:scaleX(0.9286);transform-origin:right;">9,87%</div>
<div class="t" style="top:522px;font-size:14px;letter-spacing:-0.08px;color:#0070c0;right:50px;transform:scaleX(0.9286);transform-origin:right;">250.000,00 €</div>
<div class="t" style="top:539px;font-size:14px;font-weight:bold;color:#0070c0;left:2px;transform:scaleX(0.9429);transform-origin:left;">[Seed] Co-Lead Investor</div>
<div class="t" style="top:540px;font-size:14px;letter-spacing:-0.08px;right:1467px;transform:scaleX(0.9286);transform-origin:right;">0,00%</div>
<div class="t" style="top:540px;font-size:14px;letter-spacing:-0.08px;right:1321px;transform:scaleX(0.9286);transform-origin:right;">499.933,77 €</div>
<div class="t" style="top:540px;font-size:14px;letter-spacing:-0.08px;color:#0070c0;right:1051px;transform:scaleX(0.9286);transform-origin:right;">500.000,00 €</div>
<div class="t" style="top:540px;font-size:14px;letter-spacing:-0.08px;right:946px;transform:scaleX(0.9286);transform-origin:right;">499.933,77 €</div>
<div class="t" style="top:540px;font-size:14px;letter-spacing:-0.08px;right:841px;transform:scaleX(0.9286);transform-origin:right;">498.224,77 €</div>
<div class="t" style="top:540px;font-size:14px;letter-spacing:-0.08px;right:755px;transform:scaleX(0.9286);transform-origin:right;">1.709 €</div>
<div class="t" style="top:540px;font-size:14px;letter-spacing:-0.08px;right:673px;transform:scaleX(0.9286);transform-origin:right;">0</div>
<div class="t" style="top:540px;font-size:14px;letter-spacing:-0.08px;right:605px;transform:scaleX(0.9286);transform-origin:right;">1.709</div>
<div class="t" style="top:540px;font-size:14px;letter-spacing:-0.08px;right:535px;transform:scaleX(0.9286);transform-origin:right;">1.709</div>
<div class="t" style="top:540px;font-size:14px;letter-spacing:-0.08px;right:332px;transform:scaleX(0.9286);transform-origin:right;">1.709</div>
<div class="t" style="top:540px;font-size:14px;letter-spacing:-0.08px;right:238px;transform:scaleX(0.9286);transform-origin:right;">5,32%</div>
<div class="t" style="top:540px;font-size:14px;letter-spacing:-0.08px;right:144px;transform:scaleX(0.9286);transform-origin:right;">4,93%</div>
<div class="t" style="top:540px;font-size:14px;letter-spacing:-0.08px;color:#0070c0;right:50px;transform:scaleX(0.9286);transform-origin:right;">150.000,00 €</div>
<div class="t" style="top:557px;font-size:14px;font-weight:bold;color:#0070c0;left:2px;transform:scaleX(0.9429);transform-origin:left;">Family Office</div>
<div class="t" style="top:558px;font-size:14px;letter-spacing:-0.08px;right:1467px;transform:scaleX(0.9286);transform-origin:right;">0,00%</div>
<div class="t" style="top:558px;font-size:14px;letter-spacing:-0.08px;right:1321px;transform:scaleX(0.9286);transform-origin:right;">250.113,15 €</div>
<div class="t" style="top:558px;font-size:14px;letter-spacing:-0.08px;color:#0070c0;right:1051px;transform:scaleX(0.9286);transform-origin:right;">250.000,00 €</div>
<div class="t" style="top:558px;font-size:14px;letter-spacing:-0.08px;right:946px;transform:scaleX(0.9286);transform-origin:right;">250.113,15 €</div>
<div class="t" style="top:558px;font-size:14px;letter-spacing:-0.08px;right:841px;transform:scaleX(0.9286);transform-origin:right;">249.258,15 €</div>
<div class="t" style="top:558px;font-size:14px;letter-spacing:-0.08px;right:755px;transform:scaleX(0.9286);transform-origin:right;">855 €</div>
<div class="t" style="top:558px;font-size:14px;letter-spacing:-0.08px;right:673px;transform:scaleX(0.9286);transform-origin:right;">0</div>
<div class="t" style="top:558px;font-size:14px;letter-spacing:-0.08px;right:605px;transform:scaleX(0.9286);transform-origin:right;">855</div>
<div class="t" style="top:558px;font-size:14px;letter-spacing:-0.08px;right:535px;transform:scaleX(0.9286);transform-origin:right;">855</div>
<div class="t" style="top:558px;font-size:14px;letter-spacing:-0.08px;right:332px;transform:scaleX(0.9286);transform-origin:right;">855</div>
<div class="t" style="top:558px;font-size:14px;letter-spacing:-0.08px;right:238px;transform:scaleX(0.9286);transform-origin:right;">2,66%</div>
<div class="t" style="top:558px;font-size:14px;letter-spacing:-0.08px;right:144px;transform:scaleX(0.9286);transform-origin:right;">2,47%</div>
<div class="t" style="top:558px;font-size:14px;letter-spacing:-0.08px;color:#0070c0;right:50px;transform:scaleX(0.9286);transform-origin:right;">250.000,00 €</div>
<div class="t" style="top:575px;font-size:14px;font-weight:bold;color:#0070c0;left:2px;transform:scaleX(0.9429);transform-origin:left;">Business Angel 3</div>
<div class="t" style="top:576px;font-size:14px;letter-spacing:-0.08px;right:1467px;transform:scaleX(0.9286);transform-origin:right;">0,00%</div>
<div class="t" style="top:576px;font-size:14px;letter-spacing:-0.08px;right:1321px;transform:scaleX(0.9286);transform-origin:right;">100.045,26 €</div>
<div class="t" style="top:576px;font-size:14px;letter-spacing:-0.08px;color:#0070c0;right:1051px;transform:scaleX(0.9286);transform-origin:right;">100.000,00 €</div>
<div class="t" style="top:576px;font-size:14px;letter-spacing:-0.08px;right:946px;transform:scaleX(0.9286);transform-origin:right;">100.045,26 €</div>
<div class="t" style="top:576px;font-size:14px;letter-spacing:-0.08px;right:841px;transform:scaleX(0.9286);transform-origin:right;">99.703,26 €</div>
<div class="t" style="top:576px;font-size:14px;letter-spacing:-0.08px;right:755px;transform:scaleX(0.9286);transform-origin:right;">342 €</div>
<div class="t" style="top:576px;font-size:14px;letter-spacing:-0.08px;right:673px;transform:scaleX(0.9286);transform-origin:right;">0</div>
<div class="t" style="top:576px;font-size:14px;letter-spacing:-0.08px;right:605px;transform:scaleX(0.9286);transform-origin:right;">342</div>
<div class="t" style="top:576px;font-size:14px;letter-spacing:-0.08px;right:535px;transform:scaleX(0.9286);transform-origin:right;">342</div>
<div class="t" style="top:576px;font-size:14px;letter-spacing:-0.08px;right:332px;transform:scaleX(0.9286);transform-origin:right;">342</div>
<div class="t" style="top:576px;font-size:14px;letter-spacing:-0.08px;right:238px;transform:scaleX(0.9286);transform-origin:right;">1,06%</div>
<div class="t" style="top:576px;font-size:14px;letter-spacing:-0.08px;right:144px;transform:scaleX(0.9286);transform-origin:right;">0,99%</div>
<div class="t" style="top:593px;font-size:14px;font-weight:bold;color:#0070c0;left:2px;transform:scaleX(0.9429);transform-origin:left;">[Serie A] Lead Investor</div>
<div class="t" style="top:594px;font-size:14px;letter-spacing:-0.08px;right:1467px;transform:scaleX(0.9286);transform-origin:right;">0,00%</div>
<div class="t" style="top:594px;font-size:14px;letter-spacing:-0.08px;right:1321px;transform:scaleX(0.9286);transform-origin:right;">0,00 €</div>
<div class="t" style="top:594px;font-size:14px;letter-spacing:-0.08px;right:946px;transform:scaleX(0.9286);transform-origin:right;">0,00 €</div>
<div class="t" style="top:594px;font-size:14px;letter-spacing:-0.08px;right:841px;transform:scaleX(0.9286);transform-origin:right;">0,00 €</div>
<div class="t" style="top:594px;font-size:14px;letter-spacing:-0.08px;right:755px;transform:scaleX(0.9286);transform-origin:right;">0 €</div>
<div class="t" style="top:594px;font-size:14px;letter-spacing:-0.08px;right:673px;transform:scaleX(0.9286);transform-origin:right;">0</div>
<div class="t" style="top:594px;font-size:14px;letter-spacing:-0.08px;right:605px;transform:scaleX(0.9286);transform-origin:right;">0</div>
<div class="t" style="top:594px;font-size:14px;letter-spacing:-0.08px;right:535px;transform:scaleX(0.9286);transform-origin:right;">0</div>
<div class="t" style="top:594px;font-size:14px;letter-spacing:-0.08px;right:332px;transform:scaleX(0.9286);transform-origin:right;">0</div>
<div class="t" style="top:594px;font-size:14px;letter-spacing:-0.08px;right:238px;transform:scaleX(0.9286);transform-origin:right;">0,00%</div>
<div class="t" style="top:594px;font-size:14px;letter-spacing:-0.08px;right:144px;transform:scaleX(0.9286);transform-origin:right;">0,00%</div>
<div class="t" style="top:594px;font-size:14px;letter-spacing:-0.08px;color:#0070c0;right:50px;transform:scaleX(0.9286);transform-origin:right;">2.000.000,00 €</div>
<div class="t" style="top:611px;font-size:14px;font-weight:bold;color:#0070c0;left:2px;transform:scaleX(0.9429);transform-origin:left;">[Serie A] Co-Lead Investor</div>
<div class="t" style="top:612px;font-size:14px;letter-spacing:-0.08px;right:1467px;transform:scaleX(0.9286);transform-origin:right;">0,00%</div>
<div class="t" style="top:612px;font-size:14px;letter-spacing:-0.08px;right:1321px;transform:scaleX(0.9286);transform-origin:right;">0,00 €</div>
<div class="t" style="top:612px;font-size:14px;letter-spacing:-0.08px;right:946px;transform:scaleX(0.9286);transform-origin:right;">0,00 €</div>
<div class="t" style="top:612px;font-size:14px;letter-spacing:-0.08px;right:841px;transform:scaleX(0.9286);transform-origin:right;">0,00 €</div>
<div class="t" style="top:612px;font-size:14px;letter-spacing:-0.08px;right:755px;transform:scaleX(0.9286);transform-origin:right;">0 €</div>
<div class="t" style="top:612px;font-size:14px;letter-spacing:-0.08px;right:673px;transform:scaleX(0.9286);transform-origin:right;">0</div>
<div class="t" style="top:612px;font-size:14px;letter-spacing:-0.08px;right:605px;transform:scaleX(0.9286);transform-origin:right;">0</div>
<div class="t" style="top:612px;font-size:14px;letter-spacing:-0.08px;right:535px;transform:scaleX(0.9286);transform-origin:right;">0</div>
<div class="t" style="top:612px;font-size:14px;letter-spacing:-0.08px;right:332px;transform:scaleX(0.9286);transform-origin:right;">0</div>
<div class="t" style="top:612px;font-size:14px;letter-spacing:-0.08px;right:238px;transform:scaleX(0.9286);transform-origin:right;">0,00%</div>
<div class="t" style="top:612px;font-size:14px;letter-spacing:-0.08px;right:144px;transform:scaleX(0.9286);transform-origin:right;">0,00%</div>
<div class="t" style="top:612px;font-size:14px;letter-spacing:-0.08px;color:#0070c0;right:50px;transform:scaleX(0.9286);transform-origin:right;">1.500.000,00 €</div>
<div class="t" style="top:630px;font-size:14px;font-weight:bold;font-style:italic;left:2px;transform:scaleX(0.9429);transform-origin:left;">Virtuelle Anteile</div>
<div class="t" style="top:629px;font-size:14px;letter-spacing:-0.08px;font-style:italic;right:1469px;transform:scaleX(0.9286);transform-origin:right;">0,00%</div>
<div class="t" style="top:629px;font-size:14px;letter-spacing:-0.08px;font-style:italic;right:1323px;transform:scaleX(0.9286);transform-origin:right;">0,00 €</div>
<div class="t" style="top:629px;font-size:14px;letter-spacing:-0.08px;font-style:italic;right:948px;transform:scaleX(0.9286);transform-origin:right;">0,00 €</div>
<div class="t" style="top:629px;font-size:14px;letter-spacing:-0.08px;font-style:italic;right:843px;transform:scaleX(0.9286);transform-origin:right;">0,00 €</div>
<div class="t" style="top:629px;font-size:14px;letter-spacing:-0.08px;font-style:italic;right:757px;transform:scaleX(0.9286);transform-origin:right;">0 €</div>
<div class="t" style="top:629px;font-size:14px;letter-spacing:-0.08px;font-style:italic;right:675px;transform:scaleX(0.9286);transform-origin:right;">0</div>
<div class="t" style="top:629px;font-size:14px;letter-spacing:-0.08px;font-style:italic;right:607px;transform:scaleX(0.9286);transform-origin:right;">0</div>
<div class="t" style="top:629px;font-size:14px;letter-spacing:-0.08px;font-style:italic;right:537px;transform:scaleX(0.9286);transform-origin:right;">0</div>
<div class="t" style="top:629px;font-size:14px;letter-spacing:-0.08px;font-style:italic;color:#0070c0;right:470px;transform:scaleX(0.9286);transform-origin:right;">2.500</div>
<div class="t" style="top:629px;font-size:14px;letter-spacing:-0.08px;font-style:italic;right:402px;transform:scaleX(0.9286);transform-origin:right;">2.500</div>
<div class="t" style="top:629px;font-size:14px;letter-spacing:-0.08px;font-style:italic;right:334px;transform:scaleX(0.9286);transform-origin:right;">2.500</div>
<div class="t" style="top:629px;font-size:14px;letter-spacing:-0.08px;font-style:italic;right:240px;transform:scaleX(0.9286);transform-origin:right;">0,00%</div>
<div class="t" style="top:629px;font-size:14px;letter-spacing:-0.08px;font-style:italic;right:146px;transform:scaleX(0.9286);transform-origin:right;">7,22%</div>
<div class="t" style="top:648px;font-size:14px;font-weight:bold;left:2px;transform:scaleX(0.9429);transform-origin:left;">Gesamt</div>
<div class="t" style="top:651px;font-size:14px;letter-spacing:-0.2px;font-weight:bold;right:1564px;transform:scaleX(0.9429);transform-origin:right;">25.000</div>
<div class="t" style="top:651px;font-size:14px;letter-spacing:-0.2px;font-weight:bold;right:1467px;transform:scaleX(0.9429);transform-origin:right;">100,00%</div>
<div class="t" style="top:651px;font-size:14px;letter-spacing:-0.2px;font-weight:bold;right:1321px;transform:scaleX(0.9429);transform-origin:right;">2.058.655,07 €</div>
<div class="t" style="top:651px;font-size:14px;letter-spacing:-0.2px;font-weight:bold;right:1142px;transform:scaleX(0.9429);transform-origin:right;">158.034,72 €</div>
<div class="t" style="top:651px;font-size:14px;letter-spacing:-0.2px;font-weight:bold;right:1051px;transform:scaleX(0.9429);transform-origin:right;">1.900.000,00 €</div>
<div class="t" style="top:651px;font-size:14px;letter-spacing:-0.2px;font-weight:bold;right:946px;transform:scaleX(0.9429);transform-origin:right;">1.899.982,35 €</div>
<div class="t" style="top:651px;font-size:14px;letter-spacing:-0.2px;font-weight:bold;right:841px;transform:scaleX(0.9429);transform-origin:right;">1.893.487,35 €</div>
<div class="t" style="top:651px;font-size:14px;letter-spacing:-0.2px;font-weight:bold;right:755px;transform:scaleX(0.9429);transform-origin:right;">7.133 €</div>
<div class="t" style="top:651px;font-size:14px;letter-spacing:-0.2px;font-weight:bold;right:673px;transform:scaleX(0.9429);transform-origin:right;">638</div>
<div class="t" style="top:651px;font-size:14px;letter-spacing:-0.2px;font-weight:bold;right:605px;transform:scaleX(0.9429);transform-origin:right;">6.495</div>
<div class="t" style="top:651px;font-size:14px;letter-spacing:-0.2px;font-weight:bold;right:535px;transform:scaleX(0.9429);transform-origin:right;">32.133</div>
<div class="t" style="top:651px;font-size:14px;letter-spacing:-0.2px;font-weight:bold;right:468px;transform:scaleX(0.9429);transform-origin:right;">2.500</div>
<div class="t" style="top:651px;font-size:14px;letter-spacing:-0.2px;font-weight:bold;right:400px;transform:scaleX(0.9429);transform-origin:right;">2.500</div>
<div class="t" style="top:651px;font-size:14px;letter-spacing:-0.2px;font-weight:bold;right:332px;transform:scaleX(0.9429);transform-origin:right;">34.633</div>
<div class="t" style="top:651px;font-size:14px;letter-spacing:-0.2px;font-weight:bold;right:238px;transform:scaleX(0.9429);transform-origin:right;">100,00%</div>
<div class="t" style="top:651px;font-size:14px;letter-spacing:-0.2px;font-weight:bold;right:144px;transform:scaleX(0.9429);transform-origin:right;">100,00%</div>
<div class="t" style="top:651px;font-size:14px;letter-spacing:-0.2px;font-weight:bold;right:50px;transform:scaleX(0.9429);transform-origin:right;">4.200.000,00 €</div>
<div class="t" style="top:685px;font-size:14px;font-style:italic;color:#7f7f7f;left:368px;transform:scaleX(0.9286);transform-origin:left;">S2*</div>
<div class="t" style="top:705px;font-size:14px;font-weight:bold;font-style:italic;color:#fff;left:362.0px;width:800px;text-align:center;transform:scaleX(0.9429);transform-origin:center;">Wandlung von Wandeldarlehen</div>
<div class="t" style="top:756px;font-size:14px;font-weight:bold;font-style:italic;color:#fff;left:38.0px;width:800px;text-align:center;transform:scaleX(0.9429);transform-origin:center;">Darlehensgeber</div>
<div class="t" style="top:756px;font-size:14px;font-weight:bold;font-style:italic;color:#fff;left:200.5px;width:800px;text-align:center;transform:scaleX(0.9429);transform-origin:center;">Darlehensbetrag</div>
<div class="t" style="top:739px;font-size:14px;font-weight:bold;font-style:italic;color:#fff;left:335.5px;width:800px;text-align:center;transform:scaleX(0.9429);transform-origin:center;">Datum des</div>
<div class="t" style="top:756px;font-size:14px;font-weight:bold;font-style:italic;color:#fff;left:335.5px;width:800px;text-align:center;transform:scaleX(0.9429);transform-origin:center;">Erhalts</div>
<div class="t" style="top:739px;font-size:14px;font-weight:bold;font-style:italic;color:#fff;left:433.5px;width:800px;text-align:center;transform:scaleX(0.9429);transform-origin:center;">Datum der</div>
<div class="t" style="top:756px;font-size:14px;font-weight:bold;font-style:italic;color:#fff;left:433.5px;width:800px;text-align:center;transform:scaleX(0.9429);transform-origin:center;">Unterzeichnung</div>
<div class="t" style="top:756px;font-size:14px;font-weight:bold;font-style:italic;color:#fff;left:538.5px;width:800px;text-align:center;transform:scaleX(0.9429);transform-origin:center;">Zinsen</div>
<div class="t" style="top:756px;font-size:14px;font-weight:bold;font-style:italic;color:#fff;left:634.0px;width:800px;text-align:center;transform:scaleX(0.9429);transform-origin:center;">Zinsbetrag</div>
<div class="t" style="top:732px;font-size:14px;font-weight:bold;font-style:italic;color:#fff;left:718.0px;width:800px;text-align:center;transform:scaleX(0.9429);transform-origin:center;">Wandlungs-</div>
<div class="t" style="top:749px;font-size:14px;font-weight:bold;font-style:italic;color:#fff;left:718.0px;width:800px;text-align:center;transform:scaleX(0.9429);transform-origin:center;">betrag</div>
<div class="t" style="top:775px;font-size:14px;font-weight:bold;font-style:italic;color:#3a86dc;left:368px;transform:scaleX(0.9429);transform-origin:left;">Business Angel 1</div>
<div class="t" style="top:775px;font-size:14px;letter-spacing:-0.08px;font-style:italic;color:#3a86dc;right:1144px;transform:scaleX(0.9286);transform-origin:right;">100.000,00 €</div>
<div class="t" style="top:775px;font-size:14px;letter-spacing:-0.08px;font-style:italic;color:#3a86dc;right:1053px;transform:scaleX(0.9286);transform-origin:right;">11.01.2024</div>
<div class="t" style="top:775px;font-size:14px;letter-spacing:-0.08px;font-style:italic;color:#3a86dc;right:948px;transform:scaleX(0.9286);transform-origin:right;">01.02.2025</div>
<div class="t" style="top:775px;font-size:14px;letter-spacing:-0.08px;font-style:italic;color:#3a86dc;right:843px;transform:scaleX(0.9286);transform-origin:right;">5,00%</div>
<div class="t" style="top:775px;font-size:14px;letter-spacing:-0.08px;font-style:italic;right:757px;transform:scaleX(0.9286);transform-origin:right;">5.375,00 €</div>
<div class="t" style="top:775px;font-size:14px;letter-spacing:-0.08px;font-style:italic;right:675px;transform:scaleX(0.9286);transform-origin:right;">105.375,00 €</div>
<div class="t" style="top:792px;font-size:14px;font-weight:bold;font-style:italic;color:#3a86dc;left:368px;transform:scaleX(0.9429);transform-origin:left;">Business Angel 2</div>
<div class="t" style="top:792px;font-size:14px;letter-spacing:-0.08px;font-style:italic;color:#3a86dc;right:1144px;transform:scaleX(0.9286);transform-origin:right;">50.000,00 €</div>
<div class="t" style="top:792px;font-size:14px;letter-spacing:-0.08px;font-style:italic;color:#3a86dc;right:1053px;transform:scaleX(0.9286);transform-origin:right;">15.01.2024</div>
<div class="t" style="top:792px;font-size:14px;letter-spacing:-0.08px;font-style:italic;color:#3a86dc;right:948px;transform:scaleX(0.9286);transform-origin:right;">01.02.2025</div>
<div class="t" style="top:792px;font-size:14px;letter-spacing:-0.08px;font-style:italic;color:#3a86dc;right:843px;transform:scaleX(0.9286);transform-origin:right;">5,00%</div>
<div class="t" style="top:792px;font-size:14px;letter-spacing:-0.08px;font-style:italic;right:757px;transform:scaleX(0.9286);transform-origin:right;">2.659,72 €</div>
<div class="t" style="top:792px;font-size:14px;letter-spacing:-0.08px;font-style:italic;right:675px;transform:scaleX(0.9286);transform-origin:right;">52.659,72 €</div>
<svg style="position:absolute;left:0;top:0" width="200" height="64">
<g fill="#002f86">
<rect x="4" y="25.5" width="10" height="26"/>
<rect x="18" y="25.5" width="10" height="10.5"/>
<rect x="18" y="40" width="10" height="11.5"/>
<g font-family="Liberation Sans" font-size="36.63" stroke="#002f86" stroke-width="0.70" stroke-linejoin="miter"><text transform="translate(41.00 51.4) scale(0.948 1)">H</text><text transform="translate(68.04 51.4) scale(0.670 1)">E</text><text transform="translate(86.73 51.4) scale(0.928 1)">U</text><text transform="translate(112.05 51.4) scale(0.866 1)">K</text><text transform="translate(135.48 51.4) scale(0.820 1)">I</text><text transform="translate(145.57 51.4) scale(0.924 1)">N</text><text transform="translate(170.76 51.4) scale(0.866 1)">G</text></g>
</g></svg>
<svg style="position:absolute;left:1222px;top:179px" width="18" height="18">
<path d="M5.5 1.5 h5 v4 h4 v5 h-4 v4 h-5 v-4 h-4 v-5 h4 z" fill="#fff" stroke="#000" stroke-width="2"/>
</svg>
</div></body></html>
